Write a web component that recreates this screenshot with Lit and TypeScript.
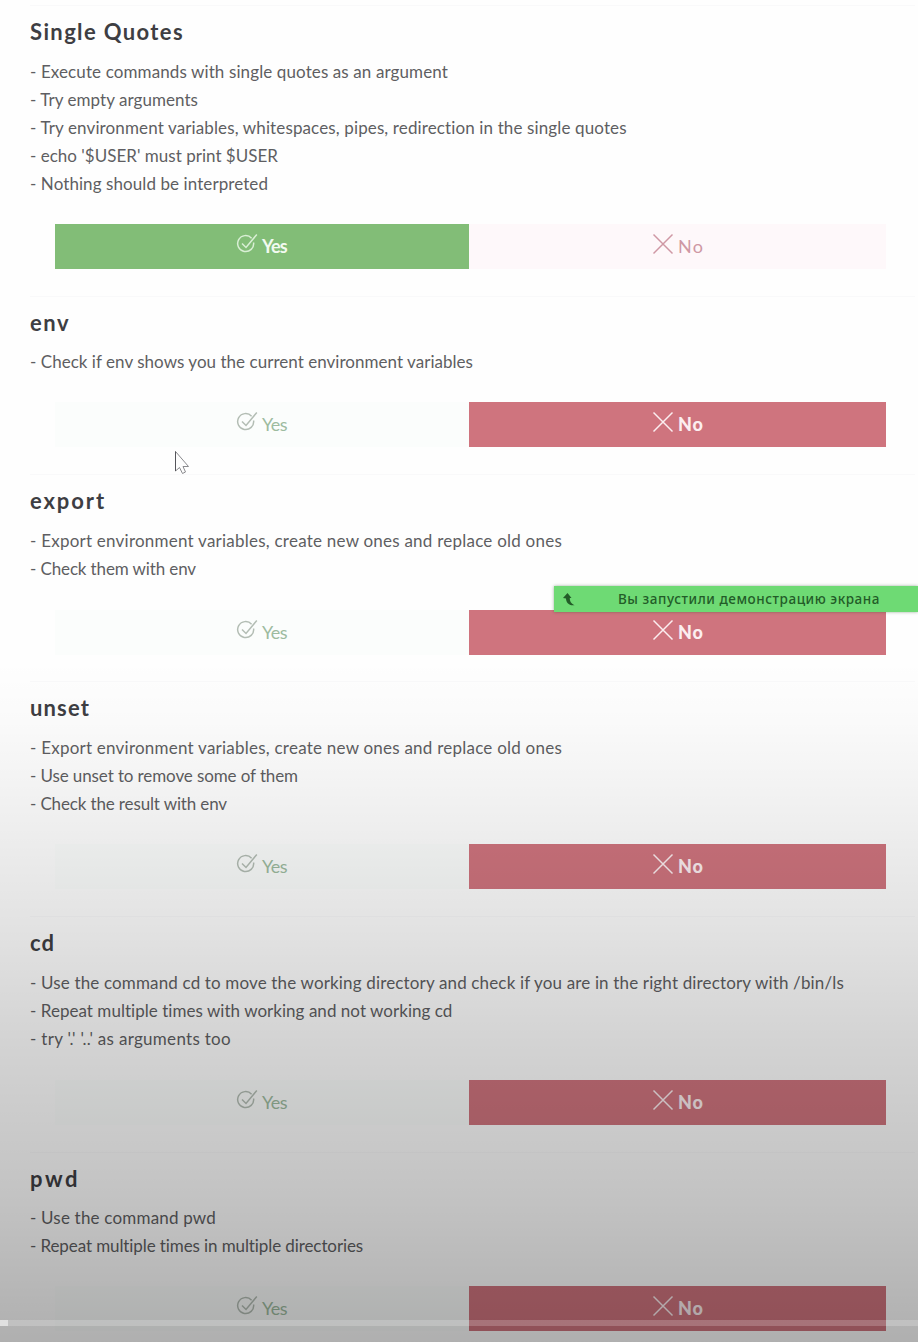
import { LitElement, html, css } from "lit";
import { customElement } from "lit/decorators.js";

type Line = [text: string, width: number];
interface Check {
  title: Line;
  lines: Line[];
  gap: number;
  tail: number;
  answer: "yes" | "no";
}

const CHECKS: Check[] = [
  {
    title: ["Single Quotes", 154],
    lines: [
      ["- Execute commands with single quotes as an argument", 418],
      ["- Try empty arguments", 168],
      ["- Try environment variables, whitespaces, pipes, redirection in the single quotes", 597],
      ["- echo '$USER' must print $USER", 248],
      ["- Nothing should be interpreted", 238],
    ],
    gap: 26, tail: 27, answer: "yes",
  },
  {
    title: ["env", 40],
    lines: [["- Check if env shows you the current environment variables", 443]],
    gap: 25, tail: 27.5, answer: "no",
  },
  {
    title: ["export", 76],
    lines: [
      ["- Export environment variables, create new ones and replace old ones", 532],
      ["- Check them with env", 166],
    ],
    gap: 27, tail: 26.5, answer: "no",
  },
  {
    title: ["unset", 60],
    lines: [
      ["- Export environment variables, create new ones and replace old ones", 532],
      ["- Use unset to remove some of them", 268],
      ["- Check the result with env", 197],
    ],
    gap: 25.5, tail: 27.5, answer: "no",
  },
  {
    title: ["cd", 25],
    lines: [
      ["- Use the command cd to move the working directory and check if you are in the right directory with /bin/ls", 814],
      ["- Repeat multiple times with working and not working cd", 423],
      ["- try '.' '..' as arguments too", 201],
    ],
    gap: 27, tail: 27, answer: "no",
  },
  {
    title: ["pwd", 50],
    lines: [
      ["- Use the command pwd", 186],
      ["- Repeat multiple times in multiple directories", 334],
    ],
    gap: 25, tail: 27, answer: "no",
  },
];

@customElement("fit-text")
class FitText extends LitElement {
  static properties = { text: {}, width: { type: Number } };
  declare text: string;
  declare width: number;
  static styles = css`
    :host { display: block; white-space: pre; }
    .run { display: inline-block; }
  `;
  render() {
    return html`<span class="run">${this.text}</span>`;
  }
  // Spreads the letters so that the line takes its set measure.
  updated() {
    const run = this.renderRoot.querySelector<HTMLElement>(".run")!;
    run.style.letterSpacing = "0px";
    const natural = run.getBoundingClientRect().width;
    run.style.letterSpacing = (this.width - natural) / this.text.length + "px";
  }
}

@customElement("app-root")
class AppRoot extends LitElement {
  static styles = css`
    :host {
      display: block;
      position: relative;
      height: 1342px;
      overflow: hidden;
      background: #fefefe;
      font-family: Lato, "Open Sans", sans-serif;
      color: #5e5e62;
    }
    .page { padding-top: 5px; }
    .check { display: flex; flex-direction: column; }
    .rule { height: 1px; margin: 0 3px 0 30px; background: #f9f9fa; }
    .title {
      margin: 11px 0 0 30px;
      height: 30px;
      line-height: 30px;
      font-size: 22px;
      font-weight: 700;
      color: #3e3e43;
    }
    .lines { padding: 10.5px 0 0 30px; font-size: 17px; line-height: 28.1px; }
    .answers {
      display: grid;
      grid-template-columns: 414px 417px;
      height: 45px;
      margin-left: 55px;
    }
    .answer { display: flex; align-items: center; font-size: 18px; }
    .yes { padding-left: 181px; background: #fbfdfc; color: #9dbb9f; }
    .no { padding-left: 182px; background: #fef8fa; color: #cf98a4; }
    .yes.on { background: #82bd77; color: #f2faf0; font-weight: 700; }
    .no.on { background: #cf747e; color: #fceef0; font-weight: 900; }
    .check-icon { width: 22px; height: 22px; margin: 0 4px 4px 0; color: #b3bdb4; }
    .on .check-icon { color: #d9efd5; }
    .cross-icon { width: 22px; height: 22px; margin: 0 4px 5px 1px; }
    .label { margin-top: -1px; }
    .toast {
      position: absolute;
      left: 554px;
      top: 586px;
      width: 364px;
      height: 26px;
      box-sizing: border-box;
      display: flex;
      align-items: center;
      padding-left: 8px;
      background: #6eda74;
      box-shadow: 0 0 3px rgba(40, 80, 40, 0.45);
      font-family: "Noto Sans", "Open Sans", sans-serif;
      font-size: 13.5px;
      font-weight: 500;
      color: #235c28;
    }
    .toast-icon { width: 14px; height: 16px; margin-right: 42px; }
    .cursor { position: absolute; left: 174px; top: 450px; width: 16px; height: 26px; }
    .shade {
      position: absolute;
      inset: 660px 0 0 0;
      background: linear-gradient(
        rgba(0, 0, 0, 0) 0,
        rgba(0, 0, 0, 0.015) 60px,
        rgba(0, 0, 0, 0.05) 140px,
        rgba(0, 0, 0, 0.105) 260px,
        rgba(0, 0, 0, 0.17) 380px,
        rgba(0, 0, 0, 0.235) 540px,
        rgba(0, 0, 0, 0.31) 682px
      );
    }
    .progress { position: absolute; left: 0; right: 0; top: 1320px; height: 6px; background: rgba(255, 255, 255, 0.2); }
    .played { width: 8px; height: 6px; background: rgba(255, 255, 255, 0.5); }
  `;

  private answers(answer: "yes" | "no") {
    return html`
      <div class="answers">
        <div class="answer yes ${answer === "yes" ? "on" : ""}">
          <svg class="check-icon" viewBox="0 0 22 22" fill="none" stroke="currentColor" stroke-width="1.5">
            <path d="M15.6 5.2A8 8 0 1 0 17.6 9.5M6 10.5L10 14.5L20.8 1.5" />
          </svg>
          <fit-text class="label" .text=${"Yes"} .width=${25}></fit-text>
        </div>
        <div class="answer no ${answer === "no" ? "on" : ""}">
          <svg class="cross-icon" viewBox="0 0 22 22" fill="none" stroke="currentColor" stroke-width="1.5">
            <path d="M1.5 1.5L20.5 20.5M20.5 1.5L1.5 20.5" />
          </svg>
          <fit-text class="label" .text=${"No"} .width=${26}></fit-text>
        </div>
      </div>
    `;
  }

  render() {
    return html`
      <div class="page">
        ${CHECKS.map(
          (c) => html`
            <section class="check" style="padding-bottom:${c.tail}px">
              <div class="rule"></div>
              <fit-text class="title" .text=${c.title[0]} .width=${c.title[1]}></fit-text>
              <div class="lines" style="padding-bottom:${c.gap}px">
                ${c.lines.map(([text, width]) => html`<fit-text .text=${text} .width=${width}></fit-text>`)}
              </div>
              ${this.answers(c.answer)}
            </section>
          `
        )}
      </div>
      <svg class="cursor" viewBox="0 0 16 26" fill="#fdfdfd" stroke="#8a8a8e" stroke-width="1">
        <path d="M1.5 1.5V21L5.5 17.5L8.5 23.5L11.5 22L9 16.5H14.5Z" />
        <path d="M1.5 1.5V21" stroke="#55555a" />
      </svg>
      <div class="toast">
        <svg class="toast-icon" viewBox="0 0 14 16" fill="#235c28">
          <path d="M5.5 2L9.5 7H7.8C7.8 10.5 9 12.5 12.5 14.2C7 15 4 11.5 4 7.5L1 7Z" />
        </svg>
        <fit-text .text=${"Вы запустили демонстрацию экрана"} .width=${262}></fit-text>
      </div>
      <div class="shade"></div>
      <div class="progress"><div class="played"></div></div>
    `;
  }
}
